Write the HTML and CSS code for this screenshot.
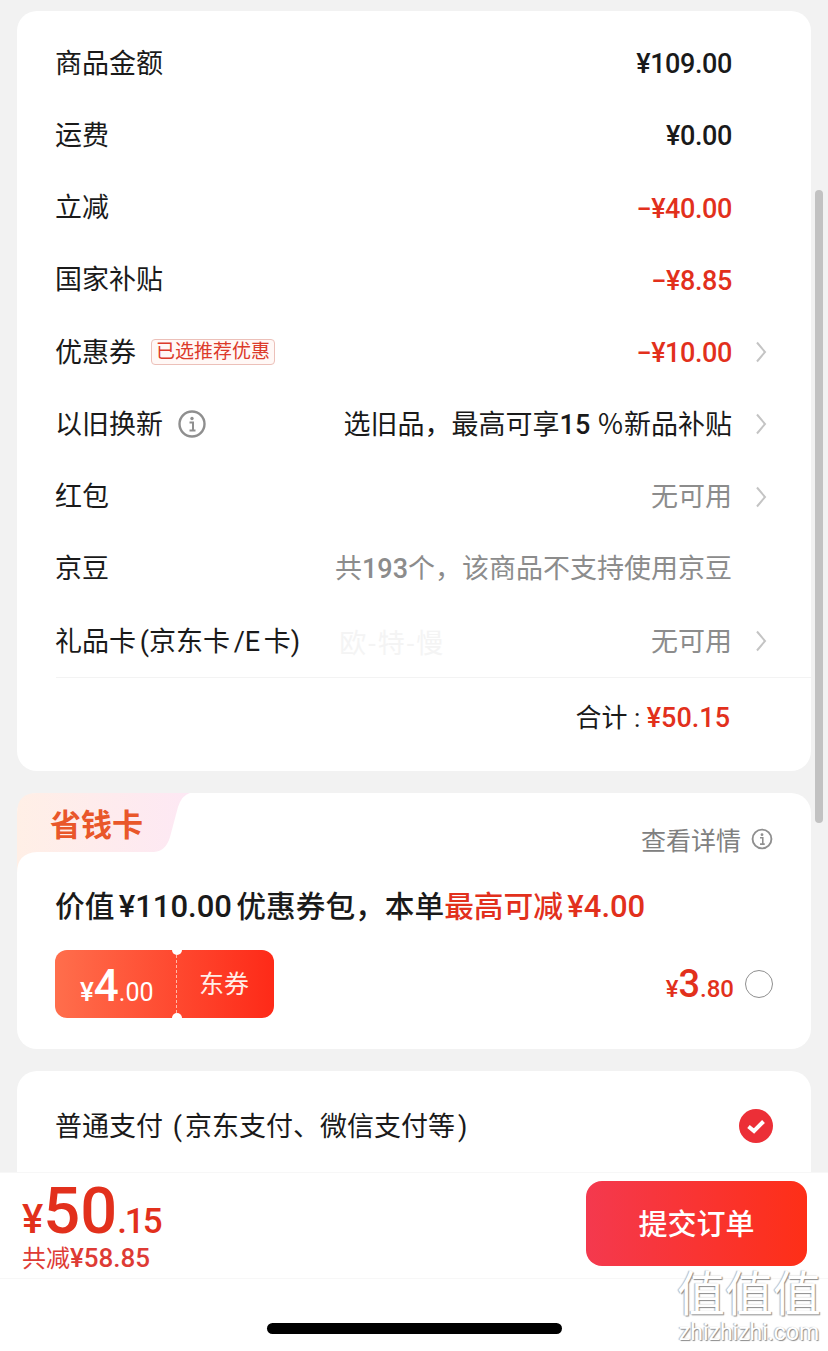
FILE: index.html
```html
<!DOCTYPE html>
<html lang="zh-CN">

<head>
    <meta charset="UTF-8">
    <meta name="viewport" content="width=device-width, initial-scale=1.0">
    <title>确认订单</title>
    <link rel="stylesheet" href="styles.css">
</head>

<body>
    <div class="page">
        <div class="content">
            <section class="card fee-card">
                <div class="row plain"><span>商品金额</span><span class="val num">¥109.00</span></div>
                <div class="row plain"><span>运费</span><span class="val num">¥0.00</span></div>
                <div class="row plain"><span>立减</span><span class="val num red">−¥40.00</span></div>
                <div class="row plain"><span>国家补贴</span><span class="val num red">−¥8.85</span></div>
                <div class="row">
                    <span>优惠券</span>
                    <span class="tag">已选推荐优惠</span>
                    <span class="val num red">−¥10.00</span>
                    <span class="arrow"><svg width="12" height="22" viewBox="0 0 12 22"><path d="M2 1.5 10 11 2 20.5" /></svg></span>
                </div>
                <div class="row">
                    <span>以旧换新</span>
                    <svg class="info" width="28" height="28" viewBox="0 0 28 28"><circle cx="14" cy="14" r="12.5" /><path d="M11.5 12.5H15V20M11.5 20.5H17.5" /><circle class="dot" cx="14" cy="8.5" r="1.7" /></svg>
                    <span class="val">选旧品，最高可享<b class="mid">15</b> ％新品补贴</span>
                    <span class="arrow"><svg width="12" height="22" viewBox="0 0 12 22"><path d="M2 1.5 10 11 2 20.5" /></svg></span>
                </div>
                <div class="row">
                    <span>红包</span>
                    <span class="val gray">无可用</span>
                    <span class="arrow"><svg width="12" height="22" viewBox="0 0 12 22"><path d="M2 1.5 10 11 2 20.5" /></svg></span>
                </div>
                <div class="row plain"><span>京豆</span><span class="val gray">共<b class="mid">193</b>个，该商品不支持使用京豆</span></div>
                <div class="row">
                    <span class="gift">礼品卡 (京东卡 /E 卡)</span>
                    <span class="faint">欧-特-慢</span>
                    <span class="val gray">无可用</span>
                    <span class="arrow"><svg width="12" height="22" viewBox="0 0 12 22"><path d="M2 1.5 10 11 2 20.5" /></svg></span>
                </div>
                <div class="total">合计 : <span class="num red">¥50.15</span></div>
            </section>

            <section class="card save-card">
                <svg class="tab-bg" width="174" height="80" viewBox="0 0 174 80">
                    <defs>
                        <linearGradient id="tabFill" x1="0" y1="0" x2="1" y2="0">
                            <stop offset="0" stop-color="#ffefe6" />
                            <stop offset="1" stop-color="#fde8f4" />
                        </linearGradient>
                    </defs>
                    <path d="M0 80V20Q0 0 20 0H173Q165 2 161 14L153 44Q149 58 137 59H20Q0 60 0 80Z" fill="url(#tabFill)" />
                </svg>
                <div class="save-head">
                    <span class="tab-title">省钱卡</span>
                    <span class="detail">查看详情
                        <svg class="info small" width="22" height="22" viewBox="0 0 28 28"><circle cx="14" cy="14" r="12" /><path d="M11.5 12.5H15V20M11.5 20.5H17.5" /><circle class="dot" cx="14" cy="8.5" r="1.8" /></svg>
                    </span>
                </div>
                <div class="save-title">价值 <span class="t-num">¥110.00</span> 优惠券包，本单<span class="red">最高可减 <span class="t-num">¥4.00</span></span></div>
                <div class="save-foot">
                    <div class="coupon">
                        <div class="coupon-price"><span class="c-sym">¥</span><span class="c-big">4</span><span class="c-dec">.00</span></div>
                        <div class="coupon-name">东券</div>
                    </div>
                    <div class="save-price"><span class="p-sym">¥</span><span class="p-big">3</span><span class="p-dec">.80</span></div>
                    <span class="radio"></span>
                </div>
            </section>

            <section class="card pay-card">
                <span class="pay-label">普通支付 <span class="par">(</span>京东支付、微信支付等<span class="par">)</span></span>
                <svg width="34" height="34" viewBox="0 0 34 34"><circle cx="17" cy="17" r="17" fill="#ec2f37" /><path d="M9.5 17.5 15 22 24.5 12.5" fill="none" stroke="#fff" stroke-width="4" /></svg>
            </section>
        </div>

        <footer class="bottom">
            <div class="bar">
                <div class="sum">
                    <div class="sum-price"><span class="s-sym">¥</span><span class="s-big">50</span><span class="s-dec">.15</span></div>
                    <div class="sum-cut">共减<span class="cut-num">¥58.85</span></div>
                </div>
                <button class="submit">提交订单</button>
            </div>
            <div class="home"><span></span></div>
        </footer>

        <div class="scrollbar"></div>
        <div class="mark">
            <div class="mark-cn">值值值</div>
            <div class="mark-en">zhizhizhi.com</div>
        </div>
    </div>
</body>

</html>
```

FILE: styles.css
```css
* {
    box-sizing: border-box;
}

html,
body {
    margin: 0;
    height: 100%;
}

body {
    background-color: #f2f2f2;
    color: #1a1a1a;
    font-family: Roboto, "Noto Sans CJK SC", sans-serif;
    font-size: 27px;
}

.page {
    position: relative;
    display: flex;
    flex-direction: column;
    height: 1351px;
    overflow: hidden;
}

.content {
    flex: 1;
    min-height: 0;
    overflow: hidden;
    padding: 11px 17px 0;
}

.card {
    position: relative;
    background-color: #fff;
    border-radius: 20px;
    margin-bottom: 22px;
}

.fee-card {
    height: 760px;
    padding-top: 16px;
}

.row {
    display: flex;
    align-items: center;
    height: 72.25px;
    padding: 0 44px 0 38px;
    white-space: nowrap;
}

.row.plain {
    padding-right: 79px;
}

.row > span:first-child {
    padding-bottom: 4px;
}

.val {
    margin-left: auto;
    padding-bottom: 4px;
}

.num {
    padding: 2px 0 0;
    font-weight: 500;
    font-size: 27px;
    letter-spacing: -0.4px;
}

.mid {
    font-weight: 500;
}

.red {
    color: #e2301c;
}

.gray {
    color: #8c8c8c;
}

.arrow {
    display: flex;
    justify-content: flex-end;
    width: 35px;
}

.arrow svg path {
    fill: none;
    stroke: #c4c4c4;
    stroke-width: 2;
}

.tag {
    margin: 0 0 0 15px;
    padding: 0 4px;
    height: 26px;
    line-height: 23px;
    font-size: 19px;
    color: #dc3a2a;
    border: 1px solid #ecc0b9;
    border-radius: 4px;
    background-color: #fff8f6;
}

.info {
    margin-left: 15px;
}

.info circle {
    fill: none;
    stroke: #8f8f8f;
    stroke-width: 2.4;
}

.info path {
    fill: none;
    stroke: #8f8f8f;
    stroke-width: 2;
}

.info circle.dot {
    fill: #8f8f8f;
    stroke: none;
}

.gift {
    word-spacing: -3px;
}

.faint {
    margin-left: 39px;
    font-size: 27px;
    letter-spacing: 2px;
    color: #f4f4f4;
}

.total {
    margin-left: 39px;
    height: 93px;
    padding: 0 81px 18px 0;
    border-top: 1px solid #f3f3f3;
    display: flex;
    align-items: center;
    justify-content: flex-end;
    white-space: pre;
    font-size: 26px;
}

.total .num {
    padding-top: 6px;
    letter-spacing: 0;
}

.save-card {
    height: 256px;
    padding: 0 38px;
}

.tab-bg {
    position: absolute;
    left: 0;
    top: 0;
}

.save-head {
    position: relative;
    display: flex;
    justify-content: space-between;
    height: 88px;
}

.tab-title {
    margin: 13px 0 0 -5px;
    font-size: 31px;
    line-height: 40px;
    font-weight: 700;
    color: #e9572a;
}

.detail {
    display: flex;
    align-items: center;
    gap: 10px;
    height: 91px;
    font-size: 25px;
    color: #808080;
}

.info.small {
    margin-left: 0;
}

.save-title {
    height: 50px;
    line-height: 52px;
    font-size: 29.7px;
    font-weight: 500;
    white-space: nowrap;
    word-spacing: -3px;
}

.t-num {
    font-size: 31px;
}

.save-foot {
    display: flex;
    align-items: center;
    margin-top: 19px;
}

.coupon {
    position: relative;
    display: flex;
    width: 219px;
    height: 68px;
    border-radius: 12px;
    color: #fff;
    background: linear-gradient(90deg, #ff6e4c, #fe2a18);
}

.coupon::before,
.coupon::after {
    content: "";
    position: absolute;
    left: 117px;
    width: 10px;
    height: 10px;
    border-radius: 50%;
    background-color: #fff;
}

.coupon::before {
    top: -5px;
}

.coupon::after {
    bottom: -5px;
}

.coupon-price {
    width: 122px;
    padding-left: 25px;
    border-right: 1px dashed #ffb9a8;
    line-height: 72px;
    white-space: nowrap;
}

.c-sym {
    font-size: 26px;
    font-weight: 500;
}

.c-big {
    font-size: 44px;
    font-weight: 500;
}

.c-dec {
    font-size: 25px;
}

.coupon-name {
    flex: 1;
    padding-right: 3px;
    text-align: center;
    line-height: 70px;
    font-size: 25px;
    color: #ffeee8;
}

.save-price {
    margin-left: auto;
    color: #e2301c;
    line-height: 1;
    font-weight: 500;
}

.p-sym {
    font-size: 24px;
}

.p-big {
    font-size: 38px;
}

.p-dec {
    font-size: 24px;
}

.radio {
    margin-left: 11px;
    width: 28px;
    height: 28px;
    border: 1px solid #8f8f8f;
    border-radius: 50%;
}

.pay-card {
    display: flex;
    align-items: center;
    justify-content: space-between;
    height: 140px;
    padding: 0 38px 30px;
}

.pay-label {
    padding-bottom: 4px;
}

.par {
    margin: 0 3px;
}

.bottom {
    background-color: #fff;
    border-top: 1px solid #f7f7f7;
}

.bar {
    display: flex;
    align-items: flex-start;
    justify-content: space-between;
    height: 106px;
    padding: 8px 21px 0 22px;
    border-bottom: 1px solid #f7f7f7;
}

.sum {
    margin-top: 1px;
}

.sum-price {
    color: #e2301c;
    font-weight: 500;
    line-height: 58px;
    white-space: nowrap;
}

.s-sym {
    font-size: 40px;
}

.s-big {
    font-size: 65px;
}

.s-dec {
    font-size: 35px;
    letter-spacing: -2px;
}

.sum-cut {
    margin-top: -3px;
    color: #de3b35;
    font-size: 24px;
    line-height: 16px;
}

.cut-num {
    font-size: 26px;
    font-weight: 500;
}

.submit {
    width: 221px;
    height: 85px;
    padding: 0 0 4px;
    border: none;
    border-radius: 16px;
    color: #fff;
    font-family: inherit;
    font-size: 29px;
    font-weight: 500;
    background: linear-gradient(90deg, #f4394e, #fe2f17);
}

.home {
    display: flex;
    justify-content: center;
    height: 72px;
    padding-top: 44px;
}

.home span {
    width: 295px;
    height: 11px;
    border-radius: 6px;
    background-color: #000;
}

.scrollbar {
    position: absolute;
    left: 815px;
    top: 190px;
    width: 8px;
    height: 633px;
    border-radius: 4px;
    background-color: #c2c2c2;
}

.mark {
    position: absolute;
    right: 7px;
    top: 1269px;
    width: 144px;
    text-align: center;
    color: #fff;
    text-shadow: 1px 1px 1px #8a8a8a, -1px 0 1px #b5b5b5;
}

.mark-cn {
    font-size: 48px;
    line-height: 52px;
}

.mark-en {
    font-size: 23px;
    line-height: 24px;
}
```
